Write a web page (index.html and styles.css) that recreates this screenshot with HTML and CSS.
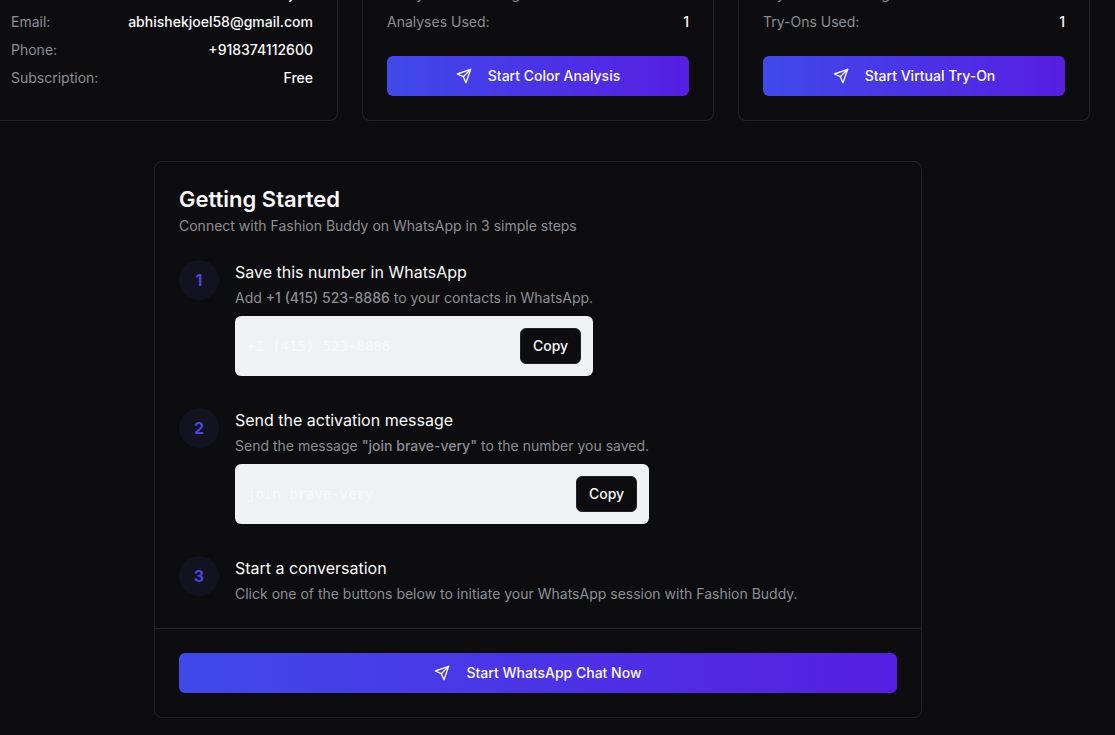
FILE: index.html
```html
<!DOCTYPE html>
<html lang="en">
<head>
<meta charset="utf-8">
<meta name="viewport" content="width=device-width, initial-scale=1">
<title>Fashion Buddy</title>
<link rel="stylesheet" href="styles.css">
</head>
<body>
<svg class="sprite" aria-hidden="true">
  <symbol id="send" viewBox="0 0 24 24" fill="none" stroke="currentColor" stroke-width="2" stroke-linecap="round" stroke-linejoin="round">
    <path d="m22 2-7 20-4-9-9-4Z"/>
    <path d="M22 2 11 13"/>
  </symbol>
</svg>
<main class="dashboard">
  <div class="summary">
    <section class="card summary-card">
      <dl class="facts">
        <div class="fact"><dt>Name:</dt><dd>abhishek joel</dd></div>
        <div class="fact"><dt>Email:</dt><dd>abhishekjoel58@gmail.com</dd></div>
        <div class="fact"><dt>Phone:</dt><dd>+918374112600</dd></div>
        <div class="fact"><dt>Subscription:</dt><dd>Free</dd></div>
      </dl>
    </section>
    <section class="card summary-card">
      <dl class="facts">
        <div class="fact"><dt>Analyses Remaining:</dt><dd>2</dd></div>
        <div class="fact"><dt>Analyses Used:</dt><dd>1</dd></div>
      </dl>
      <button class="cta" type="button"><svg class="icon"><use href="#send"/></svg>Start Color Analysis</button>
    </section>
    <section class="card summary-card">
      <dl class="facts">
        <div class="fact"><dt>Try-Ons Remaining:</dt><dd>2</dd></div>
        <div class="fact"><dt>Try-Ons Used:</dt><dd>1</dd></div>
      </dl>
      <button class="cta" type="button"><svg class="icon"><use href="#send"/></svg>Start Virtual Try-On</button>
    </section>
  </div>

  <section class="card guide">
    <header class="guide-header">
      <h2 class="guide-title">Getting Started</h2>
      <p class="muted">Connect with Fashion Buddy on WhatsApp in 3 simple steps</p>
    </header>
    <ol class="steps">
      <li class="step">
        <span class="step-number">1</span>
        <div class="step-body">
          <h3 class="step-title">Save this number in WhatsApp</h3>
          <p class="muted">Add <strong>+1 (415) 523-8886</strong> to your contacts in WhatsApp.</p>
          <div class="snippet"><code>+1 (415) 523-8886</code><button class="copy" type="button">Copy</button></div>
        </div>
      </li>
      <li class="step">
        <span class="step-number">2</span>
        <div class="step-body">
          <h3 class="step-title">Send the activation message</h3>
          <p class="muted">Send the message <strong>"join brave-very"</strong> to the number you saved.</p>
          <div class="snippet"><code>join brave-very</code><button class="copy" type="button">Copy</button></div>
        </div>
      </li>
      <li class="step">
        <span class="step-number">3</span>
        <div class="step-body">
          <h3 class="step-title">Start a conversation</h3>
          <p class="muted">Click one of the buttons below to initiate your WhatsApp session with Fashion Buddy.</p>
        </div>
      </li>
    </ol>
    <footer class="guide-footer">
      <button class="cta" type="button"><svg class="icon"><use href="#send"/></svg>Start WhatsApp Chat Now</button>
    </footer>
  </section>
</main>
</body>
</html>
```
FILE: styles.css
```css
* { box-sizing: border-box; }

body {
  margin: 0;
  overflow: hidden;
  background: #0d0d0f;
  color: #fafafa;
  font: 14px/20px Inter, "Liberation Sans", sans-serif;
}

h2, h3, p, dl, dd, ol { margin: 0; padding: 0; }
ol { list-style: none; }
button { font: inherit; font-weight: 500; cursor: pointer; }

.sprite { display: none; }

.dashboard { margin: -16px 25px 0 -14px; }

.card {
  border: 1px solid #232326;
  border-radius: 8px;
}

.summary {
  display: grid;
  grid-template-columns: repeat(3, 1fr);
  gap: 24px;
  margin-bottom: 40px;
}

.summary-card {
  display: flex;
  flex-direction: column;
  gap: 24px;
  padding: 0 24px 24px;
  border-top: 0;
}

.facts { display: grid; gap: 8px; }
.fact { display: flex; justify-content: space-between; }
.fact dt { color: #8d8d96; }
.fact dd { font-weight: 500; }

.cta {
  display: flex;
  align-items: center;
  justify-content: center;
  gap: 16px;
  width: 100%;
  height: 40px;
  border: 0;
  border-radius: 6px;
  background: linear-gradient(to right, #4049ea, #561ee2);
  color: #fafafa;
}

.icon { width: 16px; height: 16px; }

.guide { max-width: 768px; margin: 0 auto; }
.guide-header { padding: 24px; }
.guide-title {
  margin-bottom: 4px;
  font-size: 22px;
  font-weight: 600;
  line-height: 26px;
}

.muted { color: #8d8d96; }
.muted strong { font-weight: 500; }

.steps { display: grid; gap: 32px; padding: 0 24px 24px; }
.step { display: flex; align-items: flex-start; gap: 16px; }
.step-number {
  display: grid;
  place-items: center;
  flex: none;
  width: 40px;
  height: 40px;
  border-radius: 50%;
  background: #131220;
  color: #4a45dc;
  font-size: 16px;
  font-weight: 700;
}
.step-title {
  margin-bottom: 4px;
  font-size: 16px;
  font-weight: 400;
  line-height: 24px;
}

.snippet {
  display: flex;
  align-items: center;
  justify-content: space-between;
  margin-top: 8px;
  padding: 12px;
  border-radius: 6px;
  background: #f0f1f5;
}
.snippet code {
  color: #f8f8f9;
  font: 14px/20px "DejaVu Sans Mono", monospace;
}

.copy {
  height: 36px;
  padding: 0 12px;
  border: 1px solid #232326;
  border-radius: 6px;
  background: #0d0d0f;
  color: #fafafa;
}

.guide-footer { padding: 24px; border-top: 1px solid #232326; }
```
